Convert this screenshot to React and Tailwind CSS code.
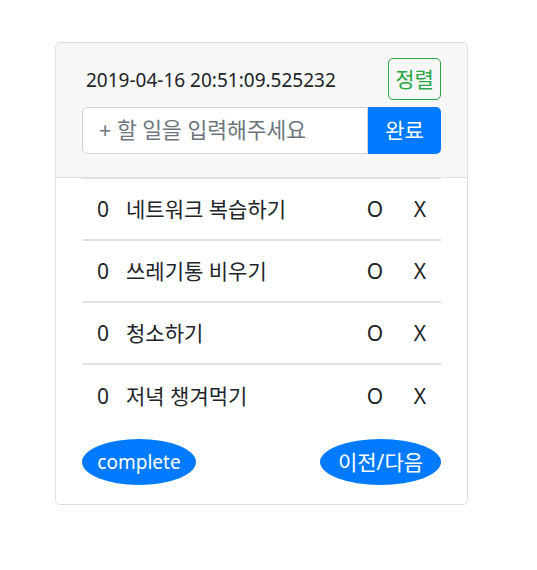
import React from "react";

const items = ["네트워크 복습하기", "쓰레기통 비우기", "청소하기", "저녁 챙겨먹기"];

export default function App() {
  return (
    <div
      className="w-[537px] min-h-[570px] bg-white pt-[42px] pl-[55px]"
      style={{ fontFamily: "'Noto Sans', 'Noto Sans CJK KR', sans-serif" }}
    >
      <div className="w-[413px] border border-[#dfdfdf] rounded-[5px] overflow-hidden">
        <div className="bg-[#f7f7f7] border-b border-[#dfdfdf] px-[26px] pt-[15px] pb-[23px]">
          <div className="flex items-center justify-between h-[42px]">
            <span className="pl-[4px] pt-[2px] text-[19px] text-[#212529] leading-none">2019-04-16 20:51:09.525232</span>
            <button className="w-[53px] h-[42px] border border-[#28a745] rounded-[5px] text-[#28a745] text-[21px] leading-none">
              정렬
            </button>
          </div>
          <div className="flex mt-[7px] h-[47px]">
            <input
              className="flex-1 min-w-0 bg-white border border-[#ced4da] rounded-l-[5px] pl-[16px] text-[21.5px] text-[#495057] placeholder:text-[#6c757d] outline-none"
              placeholder="+ 할 일을 입력해주세요"
            />
            <button className="w-[73px] bg-[#007bff] text-white text-[21px] rounded-r-[5px] leading-none">완료</button>
          </div>
        </div>
        <div className="px-[26px] pb-[19px]">
          <ul className="border-t border-[#e3e3e3]">
            {items.map((t, i) => (
              <li
                key={t}
                className={`flex items-center h-[62px] text-[21px] text-[#212529] pt-[1px] ${i < items.length - 1 ? "border-b-2 border-[#dee2e6]" : ""}`}
              >
                <span className="w-[44px] pl-[15px]">0</span>
                <span className="flex-1">{t}</span>
                <span className="w-[40px] text-center">O</span>
                <span className="w-[40px] ml-[5px] mr-[1px] text-center">X</span>
              </li>
            ))}
          </ul>
          <div className="flex justify-between mt-[12px]">
            <button className="w-[114px] h-[46px] rounded-[50%] bg-[#007bff] text-white text-[19px] leading-none">complete</button>
            <button className="w-[121px] h-[46px] rounded-[50%] bg-[#007bff] text-white text-[21px] leading-none">이전/다음</button>
          </div>
        </div>
      </div>
    </div>
  );
}
